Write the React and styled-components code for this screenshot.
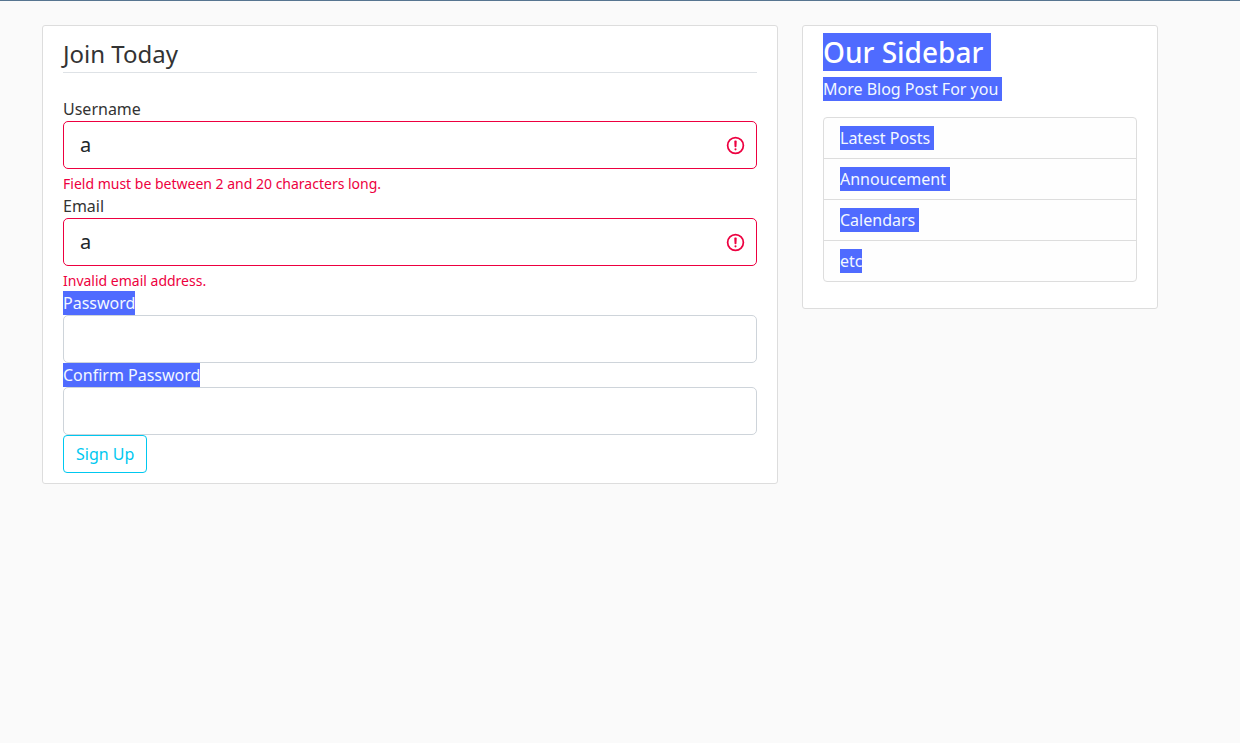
import React from "react";
import styled, { createGlobalStyle } from "styled-components";

const GlobalStyle = createGlobalStyle`
  *, *::before, *::after { box-sizing: border-box; }
  body {
    margin: 0;
    background: #fafafa;
    color: #333;
    font: 400 16px/24px "Noto Sans", "Liberation Sans", sans-serif;
  }
`;

const TopBar = styled.header`
  height: 1px;
  background: #577590;
`;

const Page = styled.div`
  padding: 24px 40px 24px 0;
`;

const Container = styled.main`
  display: grid;
  grid-template-columns: minmax(0, 1fr);
  gap: 24px;
  align-items: start;
  max-width: 1140px;
  margin: 0 auto;
  padding: 0 12px;

  @media (min-width: 768px) {
    grid-template-columns: minmax(0, 736fr) minmax(0, 356fr);
  }
`;

const Card = styled.section`
  padding: 10px 20px;
  background: #fff;
  border: 1px solid #ddd;
  border-radius: 3px;
`;

const Fieldset = styled.fieldset`
  min-width: 0;
  margin: 0;
  padding: 0;
  border: 0;
`;

const Legend = styled.legend`
  width: 100%;
  margin-bottom: 24px;
  padding: 0;
  border-bottom: 1px solid #dee2e6;
  font-size: 24px;
  line-height: 36px;
`;

const Highlight = styled.span`
  background: #4f6bff;
  color: #fff;
  white-space: pre;
`;

const Label = styled.label`
  display: block;
  width: fit-content;
  background: ${(p) => (p.$selected ? "#4f6bff" : "transparent")};
  color: ${(p) => (p.$selected ? "#f3f8ff" : "inherit")};
`;

const Control = styled.div`
  position: relative;
`;

const Input = styled.input`
  display: block;
  width: 100%;
  height: 48px;
  padding: 7px 16px 9px;
  background: #fff;
  border: 1px solid ${(p) => (p.$invalid ? "#ed0040" : "#ced4da")};
  border-radius: 5px;
  color: #212529;
  font: inherit;
  font-size: 20px;
  line-height: 30px;
`;

const AlertIcon = styled.svg`
  position: absolute;
  top: 14px;
  right: 11px;
  width: 21px;
  height: 21px;
  fill: none;
  stroke: #ed0040;
  pointer-events: none;
`;

const ErrorText = styled.p`
  margin: 4px 0 0;
  color: #ed0040;
  font-size: 14px;
  line-height: 21px;
`;

const SubmitButton = styled.button`
  display: block;
  padding: 6px 12px;
  background: transparent;
  border: 1px solid #00c8f0;
  border-radius: 4px;
  color: #00c8f0;
  font: inherit;
  cursor: pointer;
`;

const SidebarTitle = styled.h3`
  margin: 0 0 8px;
  font-size: 28px;
  font-weight: 500;
  line-height: 33px;
`;

const SidebarText = styled.p`
  margin: 0 0 16px;
`;

const LineHighlight = styled(Highlight)`
  display: block;
  width: fit-content;
  color: #f3f8ff;
`;

const List = styled.ul`
  margin: 0 0 16px;
  padding: 0;
  list-style: none;
  border: 1px solid #ddd;
  border-radius: 4px;
  background: #fefefe;
`;

const ListItem = styled.li`
  padding: 8px 16px;

  & + & {
    border-top: 1px solid #ddd;
  }
`;

function Field({ id, label, type = "text", value = "", error, selected }) {
  return (
    <>
      <Label htmlFor={id} $selected={selected}>
        {label}
      </Label>
      <Control>
        <Input
          id={id}
          name={id}
          type={type}
          defaultValue={value}
          $invalid={Boolean(error)}
          aria-invalid={Boolean(error)}
          aria-describedby={error ? `${id}-error` : undefined}
        />
        {error && (
          <AlertIcon viewBox="0 0 12 12" aria-hidden="true">
            <circle cx="6" cy="6" r="4.5" />
            <path strokeLinejoin="round" d="M5.8 3.6h.4L6.05 6.5h-.1z" />
            <circle cx="6" cy="8.2" r=".6" fill="#ed0040" stroke="none" />
          </AlertIcon>
        )}
      </Control>
      {error && <ErrorText id={`${id}-error`}>{error}</ErrorText>}
    </>
  );
}

const links = ["Latest Posts ", "Annoucement ", "Calendars ", "etc"];

export default function App() {
  return (
    <>
      <GlobalStyle />
      <TopBar />
      <Page>
        <Container>
          <Card>
            <form noValidate onSubmit={(e) => e.preventDefault()}>
              <Fieldset>
                <Legend>Join Today</Legend>
                <Field
                  id="username"
                  label="Username"
                  value="a"
                  error="Field must be between 2 and 20 characters long."
                />
                <Field
                  id="email"
                  label="Email"
                  value="a"
                  error="Invalid email address."
                />
                <Field id="password" label="Password" type="password" selected />
                <Field
                  id="confirm-password"
                  label="Confirm Password"
                  type="password"
                  selected
                />
              </Fieldset>
              <SubmitButton type="submit">Sign Up</SubmitButton>
            </form>
          </Card>
          <Card as="aside">
            <SidebarTitle>
              <Highlight>{"Our Sidebar "}</Highlight>
            </SidebarTitle>
            <SidebarText>
              <LineHighlight>{"More Blog Post For you "}</LineHighlight>
            </SidebarText>
            <List>
              {links.map((text) => (
                <ListItem key={text}>
                  <LineHighlight>{text}</LineHighlight>
                </ListItem>
              ))}
            </List>
          </Card>
        </Container>
      </Page>
    </>
  );
}
